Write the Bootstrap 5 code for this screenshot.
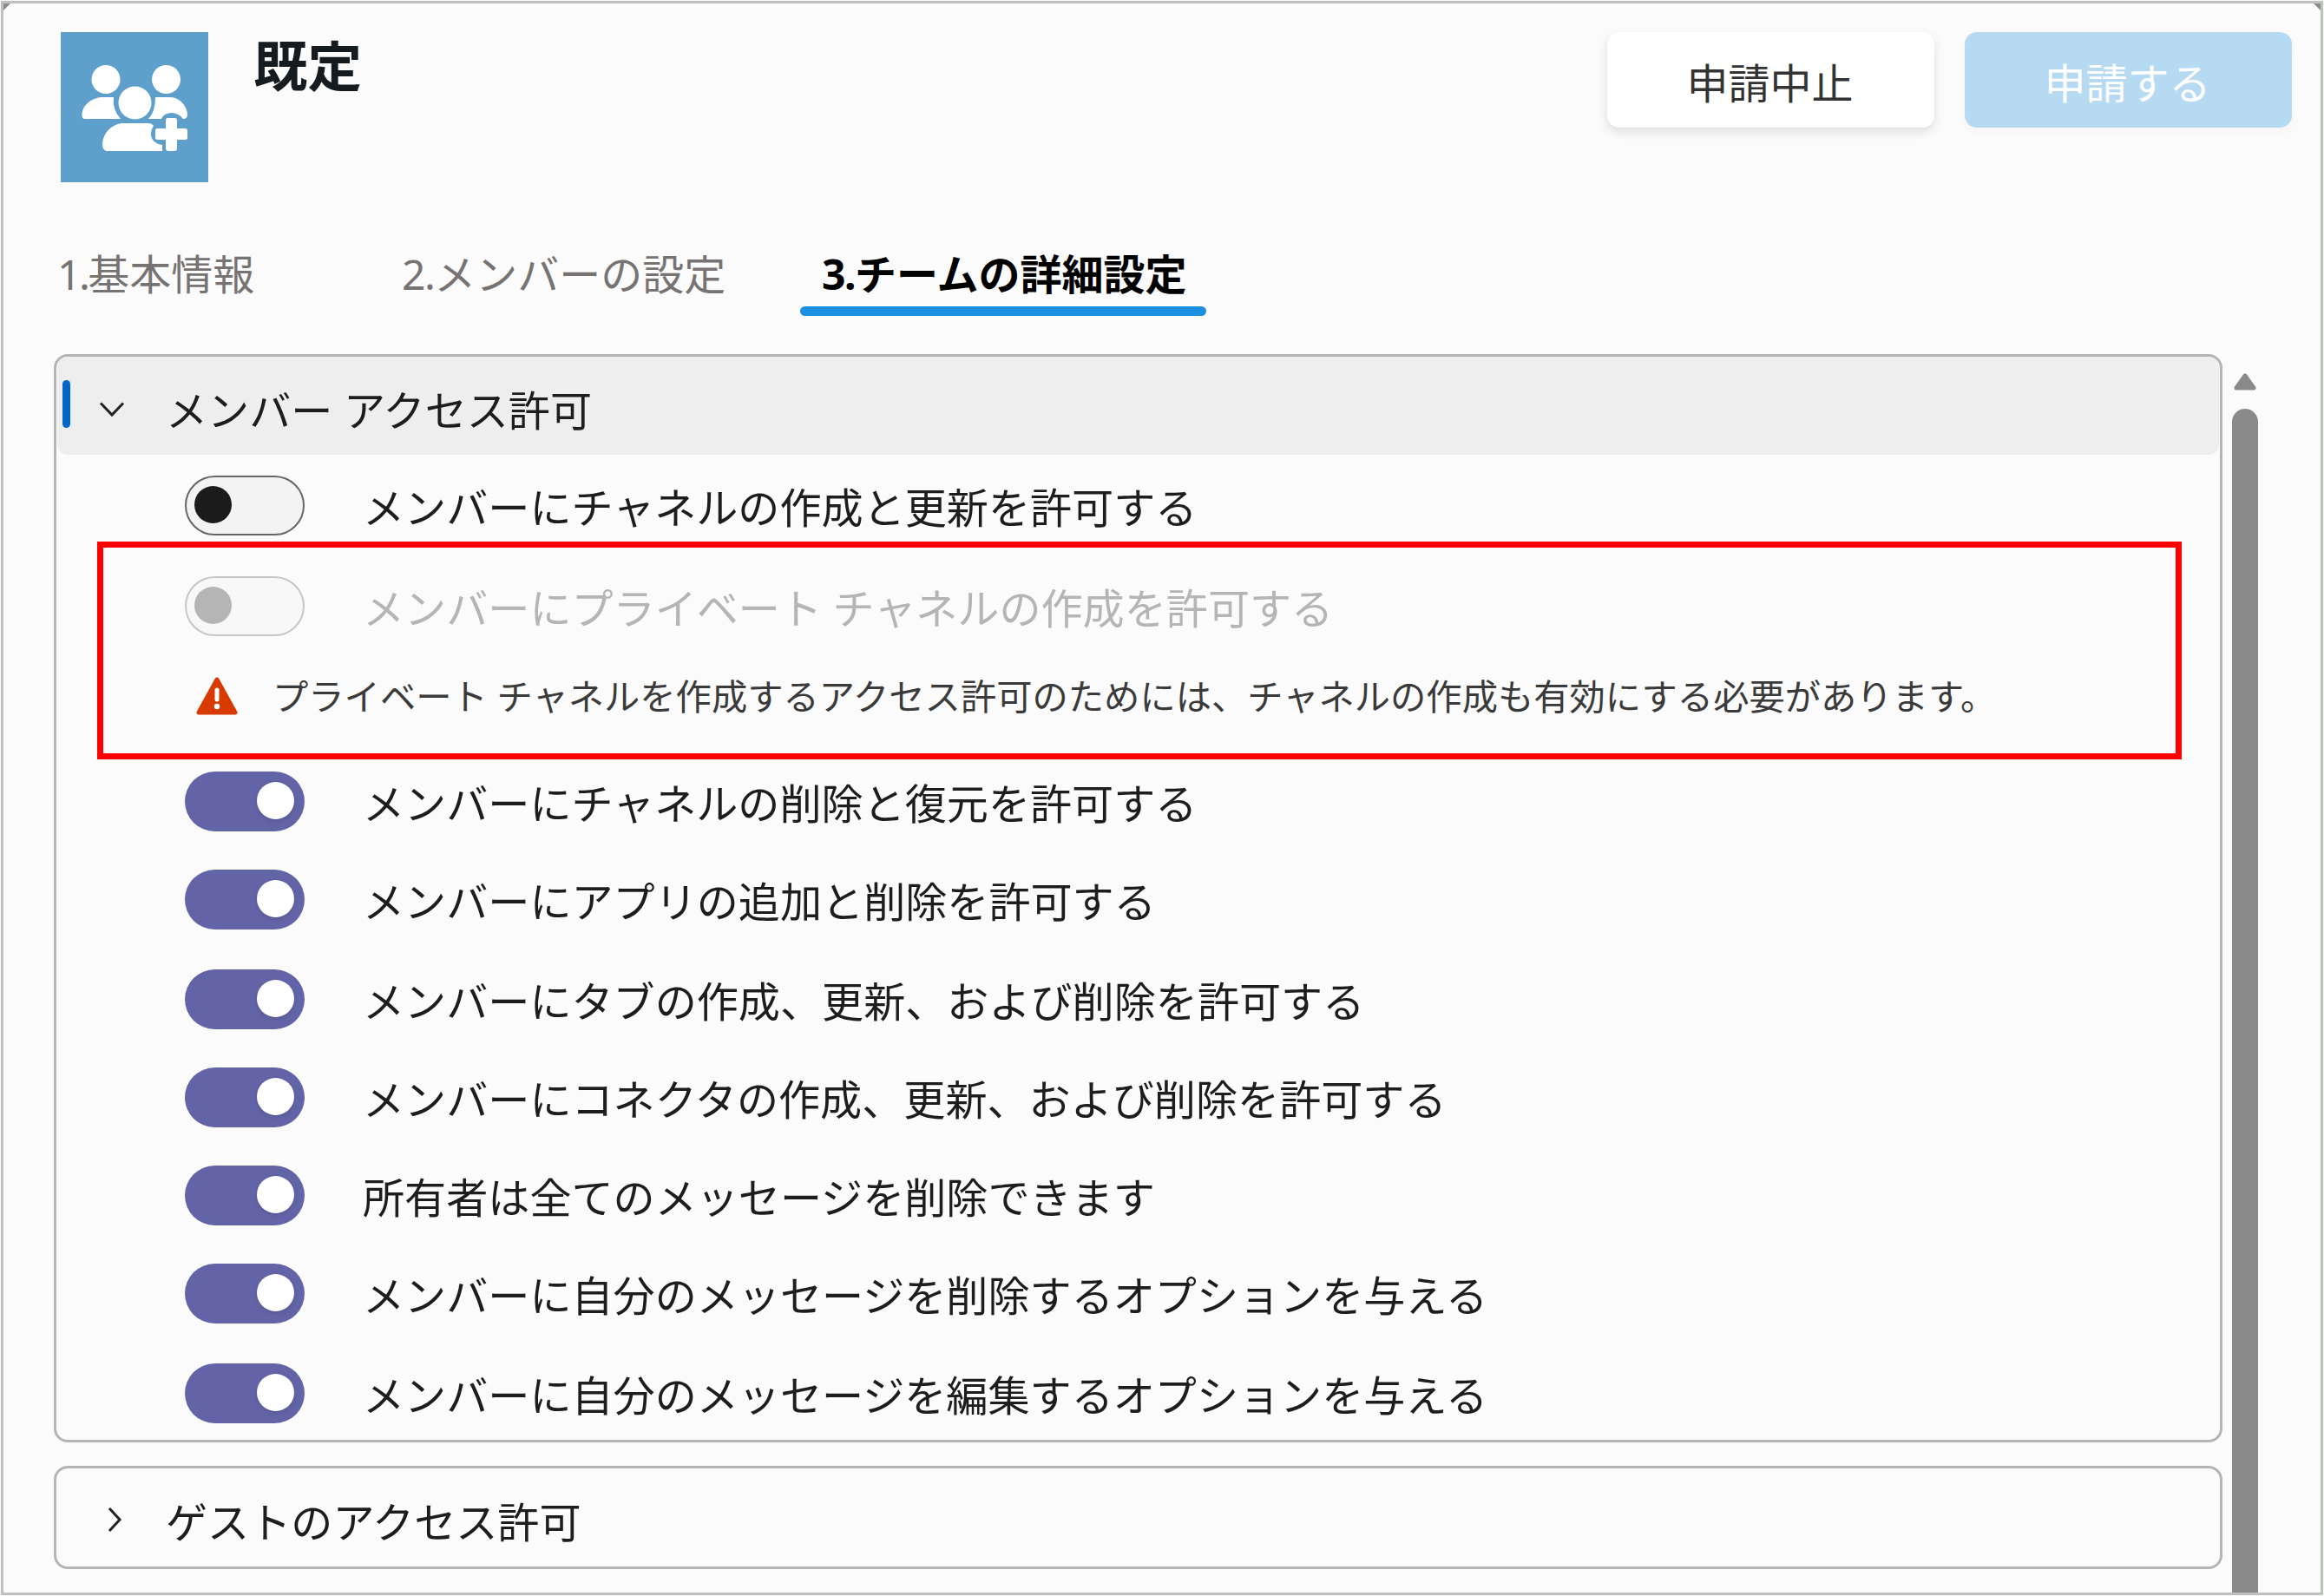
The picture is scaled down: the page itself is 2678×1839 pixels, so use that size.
<!DOCTYPE html>
<html lang="ja">
<head>
<meta charset="utf-8">
<title>既定</title>
<link href="https://cdn.jsdelivr.net/npm/bootstrap@5.3.0/dist/css/bootstrap.min.css" rel="stylesheet">
<script src="https://cdn.jsdelivr.net/npm/bootstrap@5.3.0/dist/js/bootstrap.bundle.min.js"></script>
<style>
html,body{height:100%;margin:0;overflow:hidden}
body{font-family:"Noto Sans","Noto Sans CJK JP",sans-serif;background:#f6f8f6;color:#1d1d1d;padding:1px}
.frame{height:1837px;width:2676px;border:3px solid #bfc1bf;background:#fbfbfb;overflow:hidden}
.frame::before,.frame::after{content:"";position:absolute;top:4px;width:8px;height:8px}
.frame::before{left:4px;background:linear-gradient(135deg,#8b8b8b 45%,transparent 55%)}
.frame::after{right:4px;background:linear-gradient(225deg,#8b8b8b 45%,transparent 55%)}
.top{padding:33px 33px 0 66px;height:256px}
.logo{width:170px;height:173px;background:#5f9fcc;flex:none}
.title{font-family:"Noto Sans CJK JP",sans-serif;font-size:62.5px;font-weight:700;line-height:71px;margin-left:52px;color:#161b20}
.acts{gap:35px}
.act{width:377px;height:110px;border:0;border-radius:14px;font-size:48px;line-height:60px;padding:1px 2px 0 0;background:#fff;color:#333;box-shadow:0 5px 12px rgba(0,0,0,.12);font-family:"Noto Sans CJK JP",sans-serif}
.act.send{background:#b7daf3;color:#fff;opacity:1;box-shadow:0 4px 12px rgba(0,0,0,.03)}
.tabs{height:148px;font-size:48px;line-height:60px;padding-left:36px}
.tabs .nav-link{color:#777372;padding:26px 25px 0;height:104px;white-space:nowrap}
.tabs .nav-link.active{color:#000;font-weight:700;padding-left:24px}
.tabs .t1{width:398px;padding-left:26px}
.tabs .t2{width:485px}
.num{letter-spacing:-2.5px}
.t2 .num,.active .num{letter-spacing:-1.5px}
.line3{height:11px;width:468px;border-radius:6px;background:#1b90e1;margin-left:-25px;margin-top:7px}
.main-area{padding-left:58px}
.cols{width:2499px}
.panel{border:3px solid #b4b4b4;border-radius:16px;background:#fbfbfb}
.p1{height:1254px}
.p2{height:119px;margin-top:27px;font-size:48.1px}
.phead{height:113px;margin:0 1px;border-radius:12px;background:#eee;font-size:48.1px}
.bar-mark{width:9px;height:55px;border-radius:5px;background:#0266c8;margin:-4px 0 0 6px}
.chev-down{margin:8px 0 0 33px}
.phead .lab{margin-left:47px;padding-top:10px}
.chev-right{margin:4px 0 0 58px}
.p2 .lab{margin-left:50px;padding-top:10px}
.lab{line-height:60px;white-space:nowrap;padding-top:7px}
.perm{font-size:48.1px;padding-left:148px;height:69px;margin-top:44px}
.perm.first{margin-top:24px}
.perm.after-note{margin-top:14px}
.perm.wide-gap{margin-top:46px}
.perm .lab{margin-left:67px;padding-top:4px}
.sw{width:138px;height:69px;border-radius:35px;background:#6264a7;flex:none;padding:0 12px}
.sw i{width:43px;height:43px;border-radius:50%;background:#fff;margin-top:-3px;box-shadow:0 2px 5px rgba(0,0,0,.12)}
.sw.off{background:#f3f3f3;border:2px solid #666;padding:0 9px}
.sw.off i{background:#1b1b1b;box-shadow:none}
.sw.off.dis{border-color:#c6c6c6;background:#f8f8f8}
.sw.off.dis i{background:#b5b5b5}
.dim{color:#b5b5b5}
.callout{margin:7px 0 0 47px;width:2402px;height:251px;border:7px solid #f00}
.callout .perm{padding-left:94px;margin-top:33px}
.warn{font-size:41.3px;padding-left:107px;margin-top:38px;color:#3a3a3a}
.warn .lab{margin-left:40px;padding-top:1px}
.scroller{width:31px;margin-left:11px;padding-top:22px}
.arrow-up{margin-left:2px}
.thumb{width:30px;height:1400px;border-radius:15px 15px 0 0;background:#8a8a8a;margin-top:21px}
</style>
</head>
<body>
<div class="frame">
 <header class="top d-flex align-items-start">
  <div class="logo"><svg width="170" height="173" viewBox="70 37 170 173" fill="#fff">
   <circle cx="122" cy="91.500" r="16.500"/><circle cx="191.500" cy="91.500" r="16.500"/><circle cx="155.500" cy="118.500" r="19"/>
   <path d="M98 137Q94 137 94.500 132C95 120 107 112 119 112H131Q129 126 139 137Z"/>
   <path d="M179 112H196C208 112 216 124 216 132Q216 137 211 137Q207 131 198 130Q189 130 186 137H171Q179 129 179 112Z"/>
   <path d="M123 174Q118 173 118 166C119 152 130 142 143 142H170Q175 142 177 145Q174 149 174 156Q175 165 187 167V174Z"/>
   <path d="M193.500 136H201.500Q204 136 204 138.500V148H213.500Q216 148 216 150.500V158.500Q216 161 213.500 161H204V171Q204 174 201 174H194Q191 174 191 171V161H181.500Q179 161 179 158.500V150.500Q179 148 181.500 148H191V138.500Q191 136 193.500 136Z"/>
  </svg></div>
  <h1 class="title mb-0">既定</h1>
  <div class="acts d-flex ms-auto"><button class="btn act">申請中止</button><button class="btn act send" disabled>申請する</button></div>
 </header>
 <nav class="nav tabs flex-nowrap">
  <a class="nav-link t1"><span class="num">1.</span>基本情報</a><a class="nav-link t2"><span class="num">2.</span>メンバーの設定</a>
  <a class="nav-link active"><span class="num">3.</span>チームの詳細設定<div class="line3"></div></a>
 </nav>
 <main class="main-area d-flex align-items-start">
  <div class="cols">
   <section class="panel p1">
    <div class="phead d-flex align-items-center"><div class="bar-mark"></div>
     <svg class="chev-down" width="30" height="18" fill="none" stroke="#222" stroke-width="3"><path d="M2 1.500L15 15L28 1.500"/></svg>
     <span class="lab">メンバー アクセス許可</span></div>
    <div class="perm first d-flex align-items-center"><div class="sw off d-flex align-items-center"><i></i></div><span class="lab">メンバーにチャネルの作成と更新を許可する</span></div>
    <div class="callout">
     <div class="perm d-flex align-items-center dim"><div class="sw off dis d-flex align-items-center"><i></i></div><span class="lab">メンバーにプライベート チャネルの作成を許可する</span></div>
     <div class="warn d-flex align-items-center"><svg width="48" height="44" viewBox="0 0 48 44"><path d="M24 3L45 41H3Z" fill="#d83b01" stroke="#d83b01" stroke-width="5" stroke-linejoin="round"/><path d="M24 15V26" stroke="#fff" stroke-width="5" stroke-linecap="round"/><circle cx="24" cy="34" r="3.200" fill="#fff"/></svg><span class="lab">プライベート チャネルを作成するアクセス許可のためには、チャネルの作成も有効にする必要があります。</span></div>
    </div>
    <div class="perm after-note d-flex align-items-center"><div class="sw d-flex align-items-center justify-content-end"><i></i></div><span class="lab">メンバーにチャネルの削除と復元を許可する</span></div>
    <div class="perm d-flex align-items-center"><div class="sw d-flex align-items-center justify-content-end"><i></i></div><span class="lab">メンバーにアプリの追加と削除を許可する</span></div>
    <div class="perm wide-gap d-flex align-items-center"><div class="sw d-flex align-items-center justify-content-end"><i></i></div><span class="lab">メンバーにタブの作成、更新、および削除を許可する</span></div>
    <div class="perm d-flex align-items-center"><div class="sw d-flex align-items-center justify-content-end"><i></i></div><span class="lab">メンバーにコネクタの作成、更新、および削除を許可する</span></div>
    <div class="perm d-flex align-items-center"><div class="sw d-flex align-items-center justify-content-end"><i></i></div><span class="lab">所有者は全てのメッセージを削除できます</span></div>
    <div class="perm d-flex align-items-center"><div class="sw d-flex align-items-center justify-content-end"><i></i></div><span class="lab">メンバーに自分のメッセージを削除するオプションを与える</span></div>
    <div class="perm wide-gap d-flex align-items-center"><div class="sw d-flex align-items-center justify-content-end"><i></i></div><span class="lab">メンバーに自分のメッセージを編集するオプションを与える</span></div>
   </section>
   <section class="panel p2 d-flex align-items-center">
    <svg class="chev-right" width="18" height="30" fill="none" stroke="#222" stroke-width="3"><path d="M3 2L15 15L3 28"/></svg>
    <span class="lab">ゲストのアクセス許可</span>
   </section>
  </div>
  <div class="scroller"><svg class="arrow-up d-block" width="26" height="20"><path d="M13 3L23 17H3Z" fill="#8a8a8a" stroke="#8a8a8a" stroke-width="5" stroke-linejoin="round"/></svg><div class="thumb"></div></div>
 </main>
</div>
</body>
</html>
